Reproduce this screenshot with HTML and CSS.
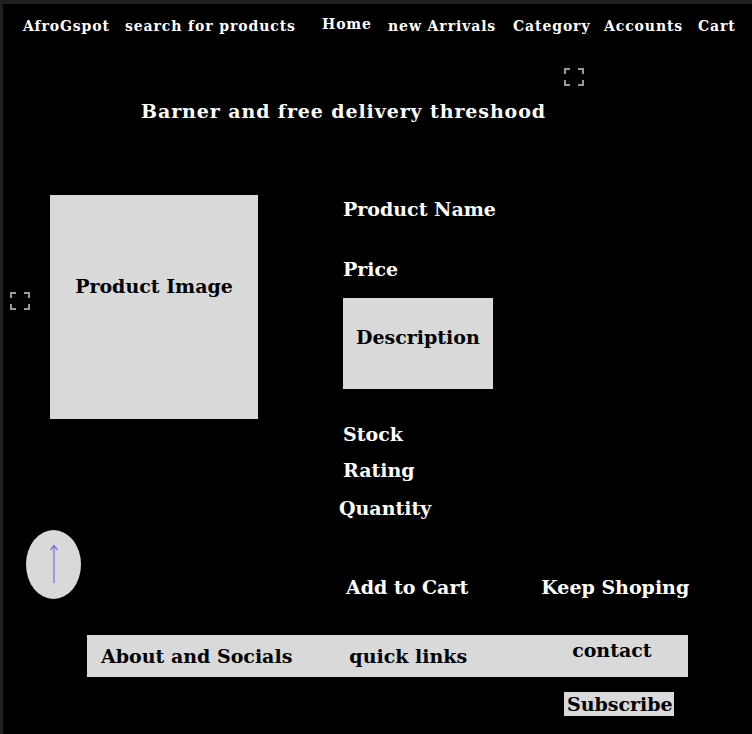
FILE: index.html
```html
<!DOCTYPE html>
<html>
<head>
<meta charset="utf-8">
<link rel="stylesheet" href="styles.css">
</head>
<body>
<div class="page">
  <nav class="nav">
    <span class="brand">AfroGspot</span>
    <span class="search">search for products</span>
    <span class="link home">Home</span>
    <span class="link new">new Arrivals</span>
    <span class="link cat">Category</span>
    <span class="link acc">Accounts</span>
    <span class="link">Cart</span>
  </nav>
  <div class="banner-row">
    <h1 class="banner">Barner and free delivery threshood</h1>
    <svg class="fs fs-top" width="20" height="18" viewBox="0 0 20 18"><path d="M1 6V1h5M14 1h5v5M19 12v5h-5M6 17H1v-5" fill="none" stroke="#9a9a9a" stroke-width="2"/></svg>
  </div>
  <section class="product">
    <div class="image-col">
      <div class="image-box">Product Image</div>
      <svg class="fs fs-left" width="20" height="18" viewBox="0 0 20 18"><path d="M1 6V1h5M14 1h5v5M19 12v5h-5M6 17H1v-5" fill="none" stroke="#9a9a9a" stroke-width="2"/></svg>
    </div>
    <div class="details">
      <div class="pname">Product Name</div>
      <div class="price">Price</div>
      <div class="desc">Description</div>
      <div class="stock">Stock</div>
      <div class="rating">Rating</div>
      <div class="qty">Quantity</div>
    </div>
  </section>
  <div class="actions">
    <div class="top-btn">
      <svg width="10" height="40" viewBox="0 0 10 40"><path d="M5 39V2M1.5 6L5 1.5 8.5 6" fill="none" stroke="#7777dd" stroke-width="1.3"/></svg>
    </div>
    <span class="add">Add to Cart</span>
    <span class="keep">Keep Shoping</span>
  </div>
  <footer class="footer">
    <span class="f-about">About and Socials</span>
    <span class="f-quick">quick links</span>
    <span class="f-contact">contact</span>
  </footer>
  <div class="sub-row"><span class="subscribe">Subscribe</span></div>
</div>
</body>
</html>
```
FILE: styles.css
```css
html, body { margin: 0; padding: 0; }
body {
  background: #1f1f1f;
  font-family: "DejaVu Serif", serif;
  font-weight: bold;
  color: #fff;
}
.page {
  margin: 4px 0 0 3px;
  height: 730px;
  background: #000;
  overflow: hidden;
}
.nav {
  display: flex;
  align-items: baseline;
  padding: 14px 0 0 20px;
  font-size: 14px;
  letter-spacing: 0.9px;
  height: 24px;
  white-space: nowrap;
}
.brand { width: 102px; }
.search { width: 197px; }
.home { width: 66px; position: relative; top: -2px; }
.new { width: 125px; }
.cat { width: 91px; }
.acc { width: 94px; }
.banner-row {
  position: relative;
  height: 121px;
}
.banner {
  margin: 0;
  padding: 58px 0 0 138px;
  font-size: 19px;
  letter-spacing: 0.9px;
  font-weight: bold;
}
.fs { position: absolute; }
.fs-top { left: 561px; top: 26px; }
.product {
  display: flex;
  height: 376px;
  font-size: 19px;
}
.image-col {
  position: relative;
  width: 293px;
  padding-left: 47px;
  padding-top: 32px;
}
.image-box {
  width: 208px;
  height: 224px;
  background: #d9d9d9;
  color: #000;
  display: flex;
  justify-content: center;
  padding-top: 80px;
  box-sizing: border-box;
}
.fs-left { left: 7px; top: 129px; }
.details {
  padding-top: 35px;
}
.pname { height: 60px; }
.price { height: 40px; }
.desc {
  width: 150px;
  height: 91px;
  background: #d9d9d9;
  color: #000;
  box-sizing: border-box;
  padding: 28px 0 0 13px;
  margin-bottom: 34px;
}
.stock { height: 36px; }
.rating { height: 38px; }
.qty { margin-left: -4px; }
.actions {
  display: flex;
  align-items: center;
  padding-left: 23px;
  height: 96px;
  font-size: 19px;
}
.top-btn {
  width: 55px;
  height: 69px;
  border-radius: 50%;
  background: #d9d9d9;
  display: flex;
  align-items: center;
  justify-content: center;
  margin-right: 265px;
  position: relative;
  top: -23px;
}
.add { margin-right: 73px; }
.footer {
  margin-left: 84px;
  width: 601px;
  height: 42px;
  background: #d9d9d9;
  color: #000;
  display: flex;
  align-items: center;
  font-size: 19px;
  box-sizing: border-box;
  padding-left: 14px;
}
.f-about { margin-right: 57px; }
.f-quick { margin-right: 105px; }
.f-contact { position: relative; top: -6px; }
.sub-row {
  display: flex;
  padding: 15px 0 0 561px;
}
.subscribe {
  background: #d9d9d9;
  color: #000;
  font-size: 19px;
  padding: 1px 3px 1px;
  width: 110px;
  height: 24px;
  box-sizing: border-box;
  white-space: nowrap;
  overflow: hidden;
}
```
